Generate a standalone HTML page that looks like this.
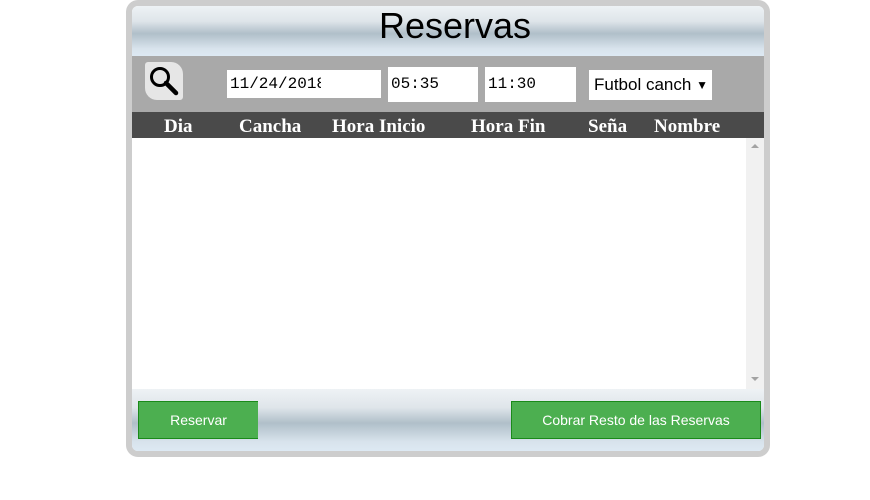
<!DOCTYPE html>
<html><head><style>
body{margin:0;width:870px;height:500px;background:#fff;position:relative;font-family:"Liberation Sans",sans-serif;overflow:hidden}
.outer{position:absolute;left:126px;top:0;width:632px;height:445px;border:6px solid #cdcdcd;border-radius:12px;background:#fff;overflow:hidden}
.grad{background:linear-gradient(#eef2f5 0%,#dfe5ea 30%,#b0bfc9 55%,#d8e3ec 85%,#dde9f3 100%)}
.hdr{position:absolute;left:0;top:0;width:632px;height:50px;text-align:center;font-size:36px;line-height:40px;color:#000;text-indent:14px}
.tb{position:absolute;left:0;top:50px;width:632px;height:56px;background:#a9a9a9}
.th{position:absolute;left:0;top:106px;width:632px;height:26px;background:#4a4a4a;color:#fff;font:bold 19px "Liberation Serif",serif}
.th span{position:absolute;top:4px}
.body{position:absolute;left:0;top:132px;width:614px;height:251px;background:#fff}
.sb{position:absolute;left:614px;top:132px;width:18px;height:251px;background:#f1f1f1}
.ft{position:absolute;left:0;top:383px;width:632px;height:62px}
.in{position:absolute;background:#fff;font:16px "Liberation Mono",monospace;color:#000;box-sizing:border-box;padding-left:3px}
.btn{position:absolute;background:#4caf50;border:1px solid #1a8a1a;color:#fff;font-size:14px;text-align:center;box-sizing:border-box}
</style></head><body>
<div class="outer">
<div class="hdr grad">Reservas</div>
<div class="tb">
<div style="position:absolute;left:13px;top:6px;width:38px;height:38px;background:#e6e6e6;border-radius:3px 12px 3px 12px">
<svg width="38" height="38"><circle cx="15" cy="15" r="8.5" fill="none" stroke="#000" stroke-width="3"/><line x1="21" y1="21" x2="31" y2="31" stroke="#000" stroke-width="4.5" stroke-linecap="round"/></svg></div>
<div class="in" style="left:95px;top:14px;width:154px;height:28px;line-height:28px;overflow:hidden;white-space:nowrap"><span style="display:inline-block;width:91px;overflow:hidden;vertical-align:top">11/24/2018</span></div>
<div class="in" style="left:256px;top:11px;width:90px;height:35px;line-height:35px">05:35</div>
<div class="in" style="left:353px;top:11px;width:91px;height:35px;line-height:35px">11:30</div>
<div class="in" style="left:457px;top:14px;width:123px;height:30px;display:flex;align-items:center;font:17px 'Liberation Sans',sans-serif;padding-left:5px;white-space:nowrap">Futbol canch&nbsp;<span style="font-size:12px">▼</span></div>
</div>
<div class="th"><span style="left:32px">Dia</span><span style="left:107px">Cancha</span><span style="left:200px">Hora Inicio</span><span style="left:339px">Hora Fin</span><span style="left:456px">Seña</span><span style="left:522px">Nombre</span></div>
<div class="body"></div>
<div class="sb"><div style="position:absolute;left:5px;top:6px;border:4px solid transparent;border-bottom:4px solid #a3a3a3;border-top:0"></div><div style="position:absolute;left:5px;top:239px;border:4px solid transparent;border-top:4px solid #a3a3a3;border-bottom:0"></div></div>
<div class="ft grad">
<div class="btn" style="left:6px;top:12px;width:120px;height:38px;line-height:36px;border-right:none">Reservar</div>
<div class="btn" style="left:379px;top:12px;width:250px;height:38px;line-height:36px">Cobrar Resto de las Reservas</div>
</div>
</div>
</body></html>
